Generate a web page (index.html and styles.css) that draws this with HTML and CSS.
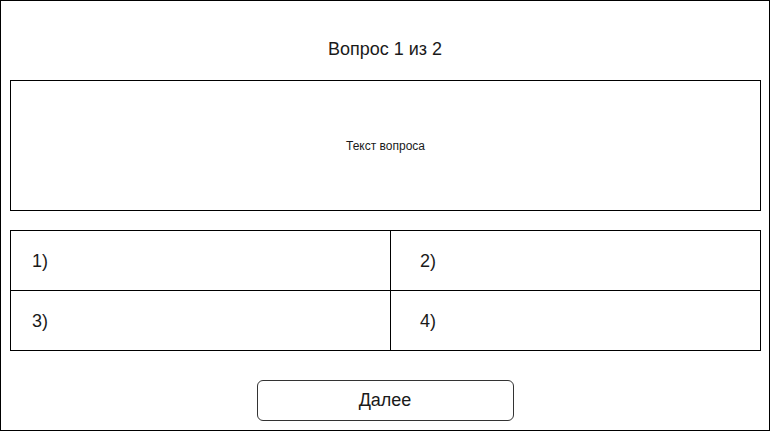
FILE: index.html
```html
<!DOCTYPE html>
<html lang="ru">
<head>
<meta charset="utf-8">
<title>Вопрос 1 из 2</title>
<link rel="stylesheet" href="styles.css">
</head>
<body>
<div class="frame">
  <div class="title">Вопрос 1 из 2</div>
  <div class="question">Текст вопроса</div>
  <div class="answers">
    <div class="cell cell-left">1)</div>
    <div class="cell cell-right">2)</div>
    <div class="cell cell-left">3)</div>
    <div class="cell cell-right">4)</div>
  </div>
  <div class="actions">
    <button class="next">Далее</button>
  </div>
</div>
</body>
</html>
```

FILE: styles.css
```css
html, body {
  margin: 0;
  padding: 0;
  background: #fff;
}

body {
  font-family: "Liberation Sans", Arial, sans-serif;
  color: #1a1a1a;
}

.frame {
  box-sizing: border-box;
  width: 770px;
  height: 431px;
  border: 1px solid #000;
  padding: 0 9px;
  display: flex;
  flex-direction: column;
}

.title {
  margin-top: 38px;
  height: 20px;
  line-height: 20px;
  font-size: 18px;
  text-align: center;
}

.question {
  box-sizing: border-box;
  margin-top: 21px;
  width: 751px;
  height: 131px;
  border: 1px solid #000;
  display: flex;
  align-items: center;
  justify-content: center;
  font-size: 12px;
}

.answers {
  box-sizing: border-box;
  margin-top: 19px;
  width: 751px;
  border-top: 1px solid #000;
  border-left: 1px solid #000;
  display: grid;
  grid-template-columns: 380px 370px;
  grid-auto-rows: 60px;
}

.cell {
  box-sizing: border-box;
  border-right: 1px solid #000;
  border-bottom: 1px solid #000;
  display: flex;
  align-items: center;
  font-size: 18px;
  padding-top: 1px;
}

.cell-left {
  padding-left: 21px;
}

.cell-right {
  padding-left: 29px;
}

.actions {
  margin-top: 29px;
  display: flex;
  justify-content: center;
}

.next {
  box-sizing: border-box;
  width: 257px;
  height: 41px;
  border: 1px solid #333;
  border-radius: 6px;
  background: #fff;
  font-family: "Liberation Sans", Arial, sans-serif;
  font-size: 18px;
  color: #1a1a1a;
  padding: 0;
}
```
